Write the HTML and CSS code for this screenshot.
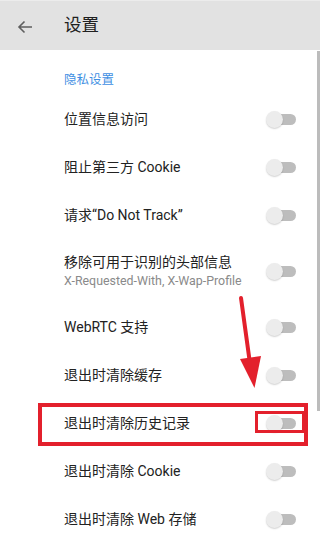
FILE: index.html
```html
<!DOCTYPE html>
<html lang="zh">
<head>
<meta charset="utf-8">
<title>设置</title>
<link rel="stylesheet" href="styles.css">
</head>
<body>
<div class="screen">
  <header class="appbar">
    <span class="back">
      <svg width="16" height="14" viewBox="0 0 16 14"><path d="M15 7H2M7.5 1.5L2 7l5.5 5.5" fill="none" stroke="#5f5f5f" stroke-width="1.6"/></svg>
    </span>
    <h1 class="title">设置</h1>
  </header>
  <main class="content">
    <div class="section">隐私设置</div>
    <div class="row"><span class="label">位置信息访问</span><span class="switch"><span class="thumb"></span></span></div>
    <div class="row"><span class="label">阻止第三方 Cookie</span><span class="switch"><span class="thumb"></span></span></div>
    <div class="row"><span class="label">请求“Do Not Track”</span><span class="switch"><span class="thumb"></span></span></div>
    <div class="row row-tall"><span class="texts"><span class="label">移除可用于识别的头部信息</span><span class="sub">X-Requested-With, X-Wap-Profile</span></span><span class="switch"><span class="thumb"></span></span></div>
    <div class="row"><span class="label">WebRTC 支持</span><span class="switch"><span class="thumb"></span></span></div>
    <div class="row"><span class="label">退出时清除缓存</span><span class="switch"><span class="thumb"></span></span></div>
    <div class="row"><span class="label">退出时清除历史记录</span><span class="switch"><span class="thumb"></span></span></div>
    <div class="row"><span class="label">退出时清除 Cookie</span><span class="switch"><span class="thumb"></span></span></div>
    <div class="row"><span class="label">退出时清除 Web 存储</span><span class="switch"><span class="thumb"></span></span></div>
  </main>
  <div class="scrollbar"></div>
  <div class="mark-row"></div>
  <div class="mark-toggle"></div>
  <svg class="arrow" width="320" height="549" viewBox="0 0 320 549">
    <line x1="241" y1="298" x2="249.5" y2="360" stroke="#e3202c" stroke-width="4" stroke-linecap="round"/>
    <polygon points="240,359 261,356 254.5,388" fill="#e3202c"/>
  </svg>
</div>
</body>
</html>
```
FILE: styles.css
```css
* { box-sizing: border-box; }
html, body { margin: 0; padding: 0; }
body {
  background: #fff;
  font-family: "Roboto", "Noto Sans CJK SC", sans-serif;
  color: #212121;
}
.screen {
  position: relative;
  width: 320px;
  height: 549px;
  overflow: hidden;
  background: #fff;
}
.appbar {
  height: 50px;
  background: #e2e2e2;
  border-top: 1px solid #ececec;
  display: flex;
  align-items: center;
}
.back {
  width: 64px;
  padding-left: 17px;
  display: flex;
  align-items: center;
  margin-top: 2px;
}
.title {
  margin: 0;
  font-size: 17.5px;
  font-weight: 400;
  color: #202020;
  line-height: 1;
  margin-top: 1px;
}
.content { display: flex; flex-direction: column; }
.section {
  height: 45px;
  padding: 21px 0 0 64px;
  font-size: 12.5px;
  line-height: 18px;
  color: #3f8fe3;
}
.row {
  height: 48px;
  display: flex;
  align-items: center;
  justify-content: space-between;
  padding: 0 24px 0 64px;
}
.row-tall { height: 64px; }
.label {
  font-size: 14px;
  line-height: 18px;
  color: #222;
}
.texts { display: flex; flex-direction: column; }
.texts .label { line-height: 20px; }
.sub {
  font-size: 12.4px;
  line-height: 18px;
  color: #8a8a8a;
}
.switch {
  position: relative;
  width: 30px;
  height: 17px;
  flex: none;
}
.switch::before {
  content: "";
  position: absolute;
  left: 4px;
  right: 0;
  top: 3px;
  height: 11px;
  border-radius: 6px;
  background: #bdbdbd;
}
.thumb {
  position: absolute;
  left: 0;
  top: 0;
  width: 17px;
  height: 17px;
  border-radius: 50%;
  background: #ececec;
  box-shadow: 0 1px 1.5px rgba(0,0,0,0.18);
}
.scrollbar {
  position: absolute;
  right: 0;
  top: 51px;
  width: 3px;
  height: 360px;
  background: #bcbcbc;
}
.mark-row {
  position: absolute;
  left: 38px;
  top: 403px;
  width: 270px;
  height: 43px;
  border: 4px solid #e3202c;
}
.mark-toggle {
  position: absolute;
  left: 255px;
  top: 411px;
  width: 50px;
  height: 22px;
  border: 3px solid #e3202c;
}
.arrow {
  position: absolute;
  left: 0;
  top: 0;
  pointer-events: none;
}
```
